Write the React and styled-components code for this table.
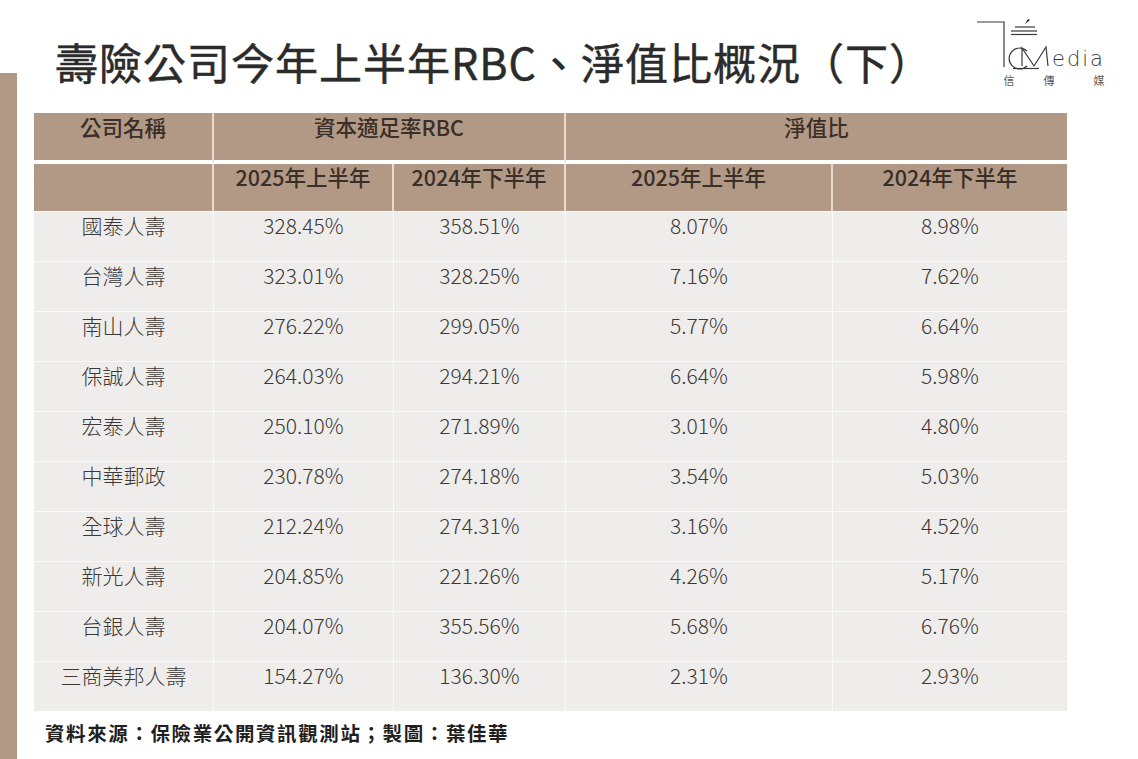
import styled, { createGlobalStyle } from 'styled-components';

const GlobalStyle = createGlobalStyle`
	html, body {
		margin: 0;
		padding: 0;
		background: #ffffff;
	}
	body {
		font-family: "Noto Sans CJK TC", "Noto Sans", sans-serif;
	}
`;

const rows = [
	['國泰人壽', '328.45%', '358.51%', '8.07%', '8.98%'],
	['台灣人壽', '323.01%', '328.25%', '7.16%', '7.62%'],
	['南山人壽', '276.22%', '299.05%', '5.77%', '6.64%'],
	['保誠人壽', '264.03%', '294.21%', '6.64%', '5.98%'],
	['宏泰人壽', '250.10%', '271.89%', '3.01%', '4.80%'],
	['中華郵政', '230.78%', '274.18%', '3.54%', '5.03%'],
	['全球人壽', '212.24%', '274.31%', '3.16%', '4.52%'],
	['新光人壽', '204.85%', '221.26%', '4.26%', '5.17%'],
	['台銀人壽', '204.07%', '355.56%', '5.68%', '6.76%'],
	['三商美邦人壽', '154.27%', '136.30%', '2.31%', '2.93%'],
];

const colWidths = [180, 180, 172, 267, 234];

const Page = styled.div`
	width: 1138px;
	height: 759px;
	display: flex;
	overflow: hidden;
	background: #fff;
`;

const SideBar = styled.div`
	width: 17px;
	margin-top: 73px;
	background: #b09a86;
	flex-shrink: 0;
`;

const Content = styled.div`
	flex: 1;
	display: flex;
	flex-direction: column;
`;

const Header = styled.div`
	height: 113px;
	display: flex;
	justify-content: space-between;
	align-items: flex-start;
`;

const Title = styled.h1`
	margin: 31px 0 0 38px;
	font-size: 43px;
	line-height: 60px;
	font-weight: 400;
	letter-spacing: 1px;
	color: #2b2b2b;
	-webkit-text-stroke: 0.5px #2b2b2b;
	white-space: nowrap;
`;

const Logo = styled.svg`
	margin: 15px 24px 0 0;
	flex-shrink: 0;
`;

const Table = styled.table`
	margin-left: 17px;
	width: 1033px;
	border-collapse: separate;
	border-spacing: 0;
	table-layout: fixed;
`;

const HeadCell = styled.th`
	box-sizing: border-box;
	height: ${(p) => (p.$gap ? 51 : 47)}px;
	padding: ${(p) => (p.$gap ? 1 : 0)}px 0 0;
	vertical-align: top;
	background: #b19985;
	color: #3a2e28;
	font-size: 21.5px;
	line-height: 26px;
	font-weight: 500;
	text-align: center;
	border-right: 2px solid #e8dace;
	border-bottom: ${(p) => (p.$gap ? '4px solid #fff' : 'none')};

	&:last-child {
		border-right: none;
	}
`;

const Cell = styled.td`
	box-sizing: border-box;
	height: 50px;
	padding: 0;
	vertical-align: top;
	background: #efedeb;
	color: #3c3836;
	font-size: 21px;
	line-height: 26px;
	font-weight: 300;
	text-align: center;
	border-top: 1px solid #fbfaf9;
	border-right: 1.5px solid #fbfaf9;

	&:last-child {
		border-right: none;
	}
`;

const Footer = styled.div`
	padding: 8px 0 0 28px;
	font-size: 19.5px;
	line-height: 28px;
	font-weight: 700;
	color: #1f1f1f;
	letter-spacing: 1.6px;
`;

const MediaLogo = () => (
	<Logo width="140" height="78" viewBox="0 0 140 78">
		<g stroke="#3a3a3a" strokeWidth="1.2" fill="none">
			<path d="M3 7 H30 V52" />
			<path d="M41 12 H61" />
			<path d="M37 16 H63" />
			<path d="M37 19.5 H63" />
			<path d="M53 36 A10.5 10.5 0 1 0 53 51" />
			<path d="M48 51 V33 L60 51 L72 32 L74 51" />
			<path d="M39 53.5 H65" />
		</g>
		<path d="M51 9 L54 4 L56 5 Z" fill="#222" />
		<text
			x="78"
			y="51"
			fontSize="21"
			fill="#3a3a3a"
			letterSpacing="2"
			fontFamily="'DejaVu Sans', sans-serif"
			fontWeight="200"
		>
			edia
		</text>
		<g fontSize="11" fill="#555" fontFamily="'Noto Sans CJK TC', serif" textAnchor="middle">
			<text x="35" y="70">信</text>
			<text x="75" y="70">傳</text>
			<text x="125" y="70">媒</text>
		</g>
	</Logo>
);

const App = () => (
	<>
		<GlobalStyle />
		<Page>
			<SideBar />
			<Content>
				<Header>
					<Title>壽險公司今年上半年RBC、淨值比概況（下）</Title>
					<MediaLogo />
				</Header>
				<Table>
					<colgroup>
						{colWidths.map((w, i) => (
							<col key={i} style={{ width: w }} />
						))}
					</colgroup>
					<thead>
						<tr>
							<HeadCell $gap>公司名稱</HeadCell>
							<HeadCell $gap colSpan={2}>資本適足率RBC</HeadCell>
							<HeadCell $gap colSpan={2}>淨值比</HeadCell>
						</tr>
						<tr>
							<HeadCell />
							<HeadCell>2025年上半年</HeadCell>
							<HeadCell>2024年下半年</HeadCell>
							<HeadCell>2025年上半年</HeadCell>
							<HeadCell>2024年下半年</HeadCell>
						</tr>
					</thead>
					<tbody>
						{rows.map((r) => (
							<tr key={r[0]}>
								{r.map((v, i) => (
									<Cell key={i}>{v}</Cell>
								))}
							</tr>
						))}
					</tbody>
				</Table>
				<Footer>資料來源：保險業公開資訊觀測站；製圖：葉佳華</Footer>
			</Content>
		</Page>
	</>
);

export default App;
